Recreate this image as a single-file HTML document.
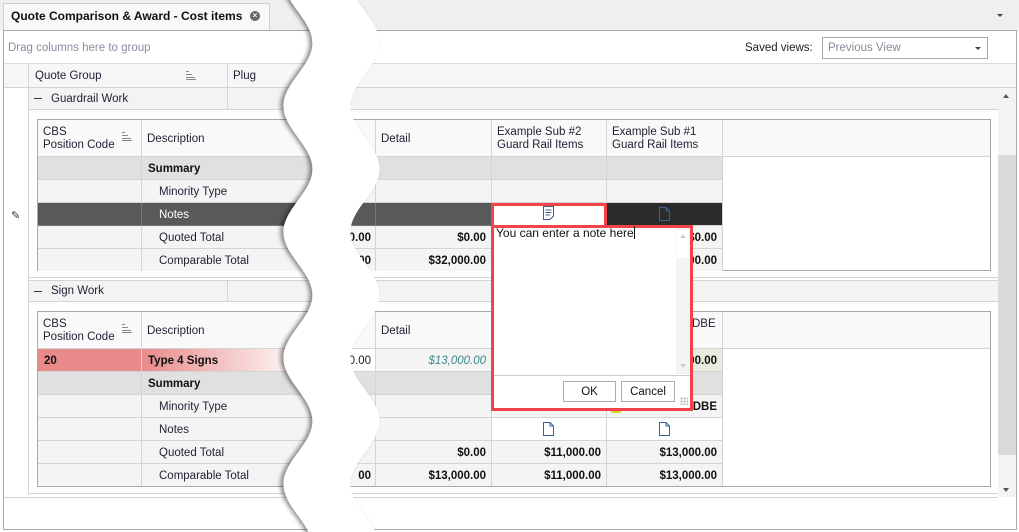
<!DOCTYPE html>
<html><head><meta charset="utf-8"><style>
*{margin:0;padding:0;box-sizing:border-box}
body{width:1019px;height:532px;overflow:hidden;background:#fff;font-family:"Liberation Sans",sans-serif;font-size:11.5px;color:#1f1f33;position:relative}
div{position:absolute}
.c{border-right:1px solid #d4d4d4;border-bottom:1px solid #d4d4d4;background:#f4f4f4;white-space:nowrap;overflow:hidden;line-height:24px}
.h{background:#f9f9f9;line-height:13px}
.s{background:#e0e0e0}
.d{background:#595959;color:#fff}
.b{font-weight:bold;color:#111}
.r{text-align:right;padding-right:5px}
.w{background:#fff}
.doc{position:absolute;width:11px;height:14px}
</style></head><body>
<!-- tab bar -->
<div style="left:0;top:0;width:1019px;height:31px;background:#efefef"></div>
<div style="left:3px;top:3px;width:267px;height:28px;background:#f8f8f8;border:1px solid #cfcfcf;border-bottom:none"></div>
<div style="left:11px;top:9px;font-weight:bold;font-size:12px;color:#111">Quote Comparison &amp; Award - Cost items</div>
<div style="left:250px;top:11px;width:10px;height:10px;border-radius:50%;background:#666;color:#fff;font-size:8px;line-height:10px;text-align:center;font-weight:bold">×</div>
<div style="left:997px;top:14px;width:0;height:0;border-left:3px solid transparent;border-right:3px solid transparent;border-top:3px solid #444"></div>
<!-- main panel -->
<div style="left:3px;top:30px;width:1014px;height:500px;border:1px solid #a8a8a8;background:#fff"></div>
<div style="left:8px;top:42px;color:#8a8aa0">Drag columns here to group</div>
<div style="left:745px;top:42px;color:#222">Saved views:</div>
<div style="left:822px;top:37px;width:166px;height:22px;border:1px solid #a8a8a8;background:#fff"></div>
<div style="left:828px;top:42px;color:#8a8a9a">Previous View</div>
<div style="left:975px;top:47px;border-left:3px solid transparent;border-right:3px solid transparent;border-top:3px solid #444"></div>
<div style="left:4px;top:63px;width:1012px;height:25px;background:#f7f7f7;border-top:1px solid #dcdcdc;border-bottom:1px solid #d4d4d4"></div>
<div style="left:28px;top:64px;width:1px;height:430px;background:#d4d4d4"></div>
<div style="left:227px;top:64px;width:1px;height:46px;background:#d4d4d4"></div>
<div style="left:35px;top:70px">Quote Group</div>
<div style="left:186px;top:71px;width:10px;height:9px;border-bottom:1px solid #888"><div style="left:0;top:0;width:3px;height:1px;background:#888"></div><div style="left:0;top:3px;width:6px;height:1px;background:#888"></div><div style="left:0;top:6px;width:9px;height:1px;background:#888"></div></div>
<div style="left:233px;top:70px">Plug</div>
<!-- scrollbar -->
<div style="left:998px;top:88px;width:18px;height:409px;background:#f4f4f4"></div>
<div style="left:998px;top:155px;width:18px;height:300px;background:#dadada"></div>
<div style="left:1003px;top:94px;border-left:3px solid transparent;border-right:3px solid transparent;border-bottom:4px solid #555"></div>
<div style="left:1003px;top:488px;border-left:3px solid transparent;border-right:3px solid transparent;border-top:4px solid #555"></div>
<div style="left:4px;top:497px;width:994px;height:1px;background:#d4d4d4"></div>
<!-- group rows -->
<div style="left:29px;top:88px;width:969px;height:22px;background:#f3f3f3;border-bottom:1px solid #d4d4d4"></div>
<div style="left:227px;top:88px;width:1px;height:22px;background:#d4d4d4"></div>
<div style="left:34px;top:98px;width:8px;height:1px;background:#333"></div>
<div style="left:51px;top:93px">Guardrail Work</div>
<div style="left:29px;top:277px;width:969px;height:1px;background:#d4d4d4"></div>
<div style="left:29px;top:280px;width:969px;height:22px;background:#f3f3f3;border-top:1px solid #d4d4d4;border-bottom:1px solid #d4d4d4"></div>
<div style="left:227px;top:280px;width:1px;height:22px;background:#d4d4d4"></div>
<div style="left:34px;top:291px;width:8px;height:1px;background:#333"></div>
<div style="left:51px;top:285px">Sign Work</div>
<div style="left:29px;top:493px;width:969px;height:1px;background:#d4d4d4"></div>
<div style="left:11px;top:209px;font-size:11px;color:#333">✎</div>

<!-- grid 1 -->
<div style="left:37px;top:119px;width:954px;height:152px;border:1px solid #a8a8a8;background:#fff"></div>
<div class="c h" style="left:38px;top:120px;width:104px;height:37px;padding:6px 5px">CBS<br>Position Code</div>
<div style="left:122px;top:132px;width:10px;height:9px;border-bottom:1px solid #888"><div style="left:0;top:0;width:3px;height:1px;background:#888"></div><div style="left:0;top:3px;width:6px;height:1px;background:#888"></div><div style="left:0;top:6px;width:9px;height:1px;background:#888"></div></div>
<div class="c h" style="left:142px;top:120px;width:234px;height:37px;padding:13px 5px">Description</div>
<div class="c h" style="left:376px;top:120px;width:116px;height:37px;padding:13px 5px">Detail</div>
<div class="c h" style="left:492px;top:120px;width:115px;height:37px;padding:6px 5px">Example Sub #2<br>Guard Rail Items</div>
<div class="c h" style="left:607px;top:120px;width:116px;height:37px;padding:6px 5px">Example Sub #1<br>Guard Rail Items</div>
<div class="c h" style="left:723px;top:120px;width:267px;height:37px;border-right:none"></div>
<!-- rows -->
<div class="c s" style="left:38px;top:157px;width:104px;height:23px"></div>
<div class="c s b" style="left:142px;top:157px;width:234px;height:23px;padding-left:6px">Summary</div>
<div class="c s" style="left:376px;top:157px;width:116px;height:23px"></div>
<div class="c s" style="left:492px;top:157px;width:115px;height:23px"></div>
<div class="c s" style="left:607px;top:157px;width:116px;height:23px"></div>

<div class="c" style="left:38px;top:180px;width:104px;height:23px"></div>
<div class="c" style="left:142px;top:180px;width:234px;height:23px;padding-left:17px">Minority Type</div>
<div class="c" style="left:376px;top:180px;width:116px;height:23px"></div>
<div class="c" style="left:492px;top:180px;width:115px;height:23px"></div>
<div class="c" style="left:607px;top:180px;width:116px;height:23px"></div>

<div class="c d" style="left:38px;top:203px;width:104px;height:23px;border-color:#777"></div>
<div class="c d" style="left:142px;top:203px;width:234px;height:23px;padding-left:17px;border-color:#777">Notes</div>
<div class="c d" style="left:376px;top:203px;width:116px;height:23px;border-color:#777"></div>
<div class="c" style="left:607px;top:203px;width:116px;height:23px;background:#2b2b2b"></div>
<svg class="doc" style="left:659px;top:207px" viewBox="0 0 11 14"><path d="M0.5 0.5H7L10.5 4V13.5H0.5Z" fill="none" stroke="#3d5f92"/><path d="M7 0.5V4H10.5" fill="none" stroke="#3d5f92"/></svg>

<div class="c" style="left:38px;top:226px;width:104px;height:23px"></div>
<div class="c" style="left:142px;top:226px;width:234px;height:23px;padding-left:17px">Quoted Total</div>
<div class="c b r" style="left:376px;top:226px;width:116px;height:23px">$0.00</div>
<div class="c b r" style="left:607px;top:226px;width:116px;height:23px">$0.00</div>
<div class="c" style="left:38px;top:249px;width:104px;height:22px;border-bottom:none"></div>
<div class="c" style="left:142px;top:249px;width:234px;height:22px;padding-left:17px;border-bottom:none">Comparable Total</div>
<div class="c b r" style="left:376px;top:249px;width:116px;height:22px;border-bottom:none">$32,000.00</div>
<div class="c b r" style="left:607px;top:249px;width:116px;height:22px;border-bottom:none">$32,000.00</div>
<div class="b" style="left:320px;top:226px;width:51px;text-align:right;line-height:24px">0.00</div>
<div class="b" style="left:320px;top:249px;width:51px;text-align:right;line-height:24px">00</div>

<!-- grid 2 -->
<div style="left:37px;top:311px;width:954px;height:176px;border:1px solid #a8a8a8;background:#fff"></div>
<div class="c h" style="left:38px;top:312px;width:104px;height:37px;padding:6px 5px">CBS<br>Position Code</div>
<div style="left:122px;top:324px;width:10px;height:9px;border-bottom:1px solid #888"><div style="left:0;top:0;width:3px;height:1px;background:#888"></div><div style="left:0;top:3px;width:6px;height:1px;background:#888"></div><div style="left:0;top:6px;width:9px;height:1px;background:#888"></div></div>
<div class="c h" style="left:142px;top:312px;width:234px;height:37px;padding:13px 5px">Description</div>
<div class="c h" style="left:376px;top:312px;width:116px;height:37px;padding:13px 5px">Detail</div>
<div class="c h" style="left:492px;top:312px;width:115px;height:37px;padding:5px"></div>
<div class="c h" style="left:607px;top:312px;width:116px;height:37px;padding:6px 0 0 85px">DBE</div>
<div class="c h" style="left:723px;top:312px;width:267px;height:37px;border-right:none"></div>

<div class="c b" style="left:38px;top:349px;width:104px;height:23px;background:#e88a8a;padding-left:6px">20</div>
<div class="c b" style="left:142px;top:349px;width:234px;height:23px;padding-left:6px;background:linear-gradient(90deg,#e88a8a,#fff 70%)">Type 4 Signs</div>
<div class="c r" style="left:376px;top:349px;width:116px;height:23px;font-style:italic;color:#3a8a88">$13,000.00</div>
<div class="c" style="left:492px;top:349px;width:115px;height:23px"></div>
<div class="c b r" style="left:607px;top:349px;width:116px;height:23px;background:#e8ecdc">$13,000.00</div>
<div class="c s" style="left:38px;top:372px;width:104px;height:23px"></div>
<div class="c s b" style="left:142px;top:372px;width:234px;height:23px;padding-left:6px">Summary</div>
<div class="c s" style="left:376px;top:372px;width:116px;height:23px"></div>
<div class="c s" style="left:492px;top:372px;width:115px;height:23px"></div>
<div class="c s" style="left:607px;top:372px;width:116px;height:23px"></div>
<div class="c" style="left:38px;top:395px;width:104px;height:23px"></div>
<div class="c" style="left:142px;top:395px;width:234px;height:23px;padding-left:17px">Minority Type</div>
<div class="c" style="left:376px;top:395px;width:116px;height:23px"></div>
<div class="c" style="left:492px;top:395px;width:115px;height:23px"></div>
<div class="c b r" style="left:607px;top:395px;width:116px;height:23px">DBE</div>
<div style="left:611px;top:405px;width:10px;height:8px;background:#d8d020"></div>
<div class="c" style="left:38px;top:418px;width:104px;height:23px"></div>
<div class="c" style="left:142px;top:418px;width:234px;height:23px;padding-left:17px">Notes</div>
<div class="c" style="left:376px;top:418px;width:116px;height:23px"></div>
<div class="c w" style="left:492px;top:418px;width:115px;height:23px"></div>
<div class="c w" style="left:607px;top:418px;width:116px;height:23px"></div>
<svg class="doc" style="left:543px;top:422px" viewBox="0 0 11 14"><path d="M0.5 0.5H7L10.5 4V13.5H0.5Z" fill="#fff" stroke="#3d5f92"/><path d="M7 0.5V4H10.5" fill="none" stroke="#3d5f92"/></svg>
<svg class="doc" style="left:659px;top:422px" viewBox="0 0 11 14"><path d="M0.5 0.5H7L10.5 4V13.5H0.5Z" fill="#fff" stroke="#3d5f92"/><path d="M7 0.5V4H10.5" fill="none" stroke="#3d5f92"/></svg>
<div class="c" style="left:38px;top:441px;width:104px;height:23px"></div>
<div class="c" style="left:142px;top:441px;width:234px;height:23px;padding-left:17px">Quoted Total</div>
<div class="c b r" style="left:376px;top:441px;width:116px;height:23px">$0.00</div>
<div class="c b r" style="left:492px;top:441px;width:115px;height:23px">$11,000.00</div>
<div class="c b r" style="left:607px;top:441px;width:116px;height:23px">$13,000.00</div>
<div class="c" style="left:38px;top:464px;width:104px;height:22px;border-bottom:none"></div>
<div class="c" style="left:142px;top:464px;width:234px;height:22px;padding-left:17px;border-bottom:none">Comparable Total</div>
<div class="c b r" style="left:376px;top:464px;width:116px;height:22px;border-bottom:none">$13,000.00</div>
<div class="c b r" style="left:492px;top:464px;width:115px;height:22px;border-bottom:none">$11,000.00</div>
<div class="c b r" style="left:607px;top:464px;width:116px;height:22px;border-bottom:none">$13,000.00</div>
<div style="left:320px;top:349px;width:51px;text-align:right;line-height:24px">0.00</div>
<div class="b" style="left:320px;top:464px;width:51px;text-align:right;line-height:24px">00</div>

<!-- wavy cut -->
<svg style="position:absolute;left:0;top:0" width="1019" height="532">
<defs><filter id="sh" x="-20%" y="-5%" width="140%" height="110%"><feDropShadow dx="-3" dy="0" stdDeviation="2" flood-color="#000" flood-opacity="0.45"/></filter></defs>
<path filter="url(#sh)" fill="#fff" d="M283.5,-20 C283.5,3 312.5,20 312.5,43 C312.5,66 283.5,83 283.5,106 C283.5,129 312.5,146 312.5,169 C312.5,192 283.5,209 283.5,232 C283.5,255 312.5,272 312.5,295 C312.5,318 283.5,335 283.5,358 C283.5,381 312.5,398 312.5,421 C312.5,444 283.5,461 283.5,484 C283.5,507 312.5,524 312.5,547 L379.5,547 C379.5,524 350.5,507 350.5,484 C350.5,461 379.5,444 379.5,421 C379.5,398 350.5,381 350.5,358 C350.5,335 379.5,318 379.5,295 C379.5,272 350.5,255 350.5,232 C350.5,209 379.5,192 379.5,169 C379.5,146 350.5,129 350.5,106 C350.5,83 379.5,66 379.5,43 C379.5,20 350.5,3 350.5,-20 Z"/>
</svg>

<!-- popup -->
<div style="left:491px;top:203px;width:116px;height:26px;border:3px solid #f0444a;border-bottom:none;background:#fff"></div>
<div style="left:491px;top:225px;width:202px;height:186px;border:3px solid #f0444a;background:#fff"></div>
<div style="left:494px;top:228px;width:113px;height:3px;background:#fff"></div>
<svg class="doc" style="left:543px;top:206px" viewBox="0 0 11 14"><path d="M0.5 0.5H10.5V10L7 13.5H0.5Z" fill="#fff" stroke="#3d5f92"/><path d="M2.5 4H8.5M2.5 6.5H8.5M2.5 9H7" stroke="#3d5f92"/></svg>
<div style="left:496px;top:226px;font-size:12px;color:#111">You can enter a note here<span style="display:inline-block;width:1px;height:13px;background:#111;vertical-align:-2px"></span></div>
<div style="left:676px;top:228px;width:14px;height:146px;background:#f4f4f4"></div>
<div style="left:677px;top:230px;width:12px;height:28px;background:#fff"></div>
<div style="left:680px;top:234px;border-left:3px solid transparent;border-right:3px solid transparent;border-bottom:4px solid #ccc"></div>
<div style="left:680px;top:364px;border-left:3px solid transparent;border-right:3px solid transparent;border-top:4px solid #ccc"></div>
<div style="left:494px;top:375px;width:196px;height:1px;background:#ccc"></div>
<div style="left:563px;top:381px;width:53px;height:21px;border:1px solid #adadad;background:#fff;text-align:center;line-height:20px;color:#111">OK</div>
<div style="left:621px;top:381px;width:54px;height:21px;border:1px solid #adadad;background:#fff;text-align:center;line-height:20px;color:#111">Cancel</div>
<div style="left:680px;top:397px;width:8px;height:8px;background:radial-gradient(circle,#bbb 1px,transparent 1.2px) 0 0/3px 3px"></div>
</body></html>
